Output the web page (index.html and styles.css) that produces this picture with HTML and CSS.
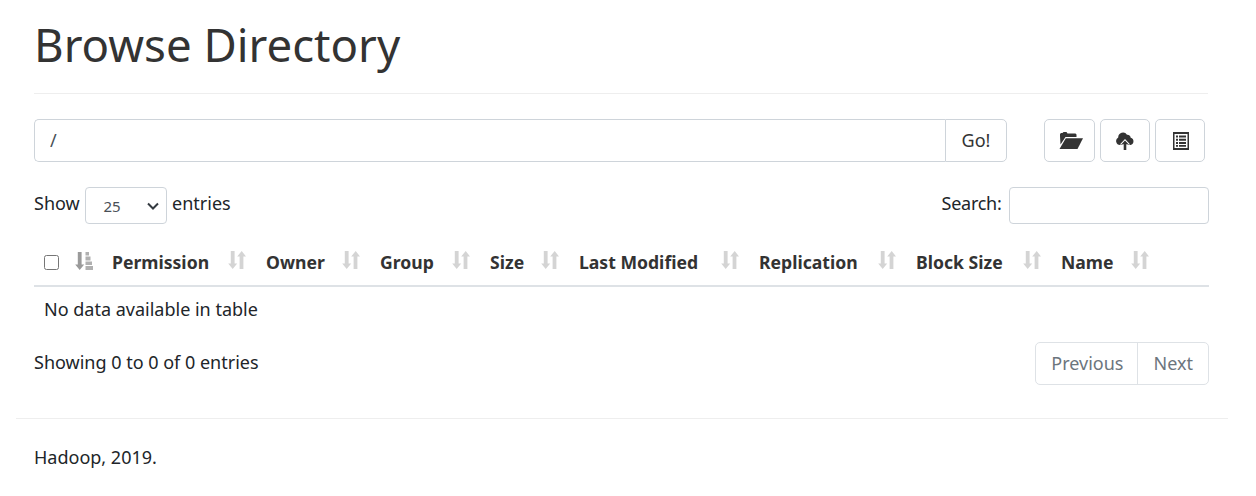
FILE: index.html
```html
<!DOCTYPE html>
<html lang="en">
<head>
  <meta charset="UTF-8" />
  <title>Browse Directory</title>
  <link rel="stylesheet" href="styles.css">
</head>
<body>
  <svg class="defs" width="0" height="0">
    <symbol id="sort-both" viewBox="0 0 18 18">
      <path d="M2.800 0h3.800v12.500h2.600L4.700 18 .2 12.500h2.600zM9.200 5.500L13.700 0l4.300 5.500h-2.600V18h-3.800V5.500z" fill="#d4d4d4"/>
    </symbol>
  </svg>

  <div class="container">
    <div class="content">
      <div class="page-header">
        <h1>Browse Directory</h1>
      </div>

      <div class="toolbar">
        <div class="path-group">
          <input type="text" class="path-input" value="/" />
          <button class="go-btn">Go!</button>
        </div>
        <div class="icon-btns">
          <button class="icon-btn folder-btn">
            <svg width="24" height="17" viewBox="0 0 24 17"><path d="M1 4V2l1-1h1.500L4.500 0h3l1 1.500h8l1 1V5H6.500L1.500 12.500z" fill="#333"/><path d="M6.800 6.200H24L18.500 17H0.500z" fill="#333"/></svg>
          </button>
          <button class="icon-btn">
            <svg width="18" height="18" viewBox="0 0 18 18"><path d="M4 13A4 4 0 0 1 2.200 5.500 4.800 4.800 0 0 1 11 2.800a3.200 3.200 0 0 1 3.700 3A3.700 3.700 0 0 1 14.500 13H4z" fill="#333"/><path d="M9 7l5.200 5.500H11.500V18h-5v-5.500H3.800z" fill="#fff"/><path d="M9 8.500l3.600 3.700H10.300v5.800H7.700v-5.800H5.400z" fill="#333"/></svg>
          </button>
          <button class="icon-btn list-btn">
            <svg width="16" height="18" viewBox="0 0 16 18"><path d="M0 0h16v18H0zM1.500 2v14h13V2z" fill="#333"/><path d="M3 3.500h2v2H3zM6 3.500h7v2H6zM3 6.800h2v2H3zM6 6.800h7v2H6zM3 10h2v2H3zM6 10h7v2H6zM3 13h2v1.800H3zM6 13h7v1.800H6z" fill="#333"/></svg>
          </button>
        </div>
      </div>

      <div class="table-top">
        <label class="length">Show
          <select class="length-select"><option>25</option></select>
          entries</label>
        <label class="search">Search: <input type="search" class="search-input" /></label>
      </div>

      <table class="files">
        <thead>
          <tr>
            <th class="col-check"><input type="checkbox" class="check" /></th>
            <th class="col-sort">
              <svg class="sort-active" width="18" height="18" viewBox="0 0 18 18"><path d="M2.800 0h3.800v12.500h2.600L4.700 18 .2 12.500h2.600z" fill="#9a9a9a"/><path d="M10.500 0h3.500v3.500h-3.500zM10.500 4.500h5v4h-5zM10.500 9.500h6.500v3.500h-6.500zM10.500 14H18v4h-7.500z" fill="#b0b0b0"/></svg>
            </th>
            <th class="col-permission">Permission <svg class="sort"><use href="#sort-both"/></svg></th>
            <th class="col-owner">Owner <svg class="sort"><use href="#sort-both"/></svg></th>
            <th class="col-group">Group <svg class="sort"><use href="#sort-both"/></svg></th>
            <th class="col-size">Size <svg class="sort"><use href="#sort-both"/></svg></th>
            <th class="col-modified">Last Modified <svg class="sort"><use href="#sort-both"/></svg></th>
            <th class="col-replication">Replication <svg class="sort"><use href="#sort-both"/></svg></th>
            <th class="col-block">Block Size <svg class="sort"><use href="#sort-both"/></svg></th>
            <th class="col-name">Name <svg class="sort"><use href="#sort-both"/></svg></th>
          </tr>
        </thead>
        <tbody>
          <tr><td colspan="10">No data available in table</td></tr>
        </tbody>
      </table>

      <div class="table-bottom">
        <div class="info">Showing 0 to 0 of 0 entries</div>
        <div class="pager">
          <a class="page-link prev">Previous</a>
          <a class="page-link next">Next</a>
        </div>
      </div>
    </div>

    <hr class="footer-rule" />
    <div class="content footer">
      <p>Hadoop, 2019.</p>
    </div>
  </div>
</body>
</html>
```

FILE: styles.css
```css
* {
  box-sizing: border-box;
}
body {
  font-family: "Noto Sans", "Open Sans", sans-serif;
  font-size: 18px;
  line-height: 27px;
  color: #212529;
  background: white;
  margin: 0;
}
.defs {
  display: block;
  height: 0;
}
.container {
  margin: 0 28px 0 16px;
}
.content {
  padding: 0 19px 0 18px;
}
.page-header {
  height: 94px;
  border-bottom: 1px solid #eee;
  padding-top: 14px;
  margin-right: 1px;
  margin-bottom: 25px;
}
h1 {
  font-size: 45.6px;
  font-weight: 400;
  line-height: 60px;
  margin: 0;
  color: #333;
}
.toolbar {
  display: flex;
  justify-content: space-between;
  align-items: center;
  height: 43px;
  padding-right: 4px;
}
.path-group {
  display: flex;
  width: 973px;
  height: 43px;
}
.path-input {
  flex: 1;
  min-width: 0;
  font: inherit;
  color: #495057;
  padding: 0 15px;
  border: 1px solid #ced4da;
  border-right: none;
  border-radius: 5px 0 0 5px;
  outline: none;
}
.go-btn {
  width: 62px;
  font: inherit;
  color: #333;
  background: white;
  border: 1px solid #ced4da;
  border-radius: 0 5px 5px 0;
  padding: 0;
}
.icon-btns {
  display: flex;
  gap: 5px;
}
.icon-btn {
  display: flex;
  align-items: center;
  justify-content: center;
  width: 50px;
  height: 43px;
  background: white;
  border: 1px solid #ced4da;
  border-radius: 5px;
  padding: 0;
}
.folder-btn {
  width: 51px;
  padding-left: 3px;
}
.list-btn {
  padding-left: 2px;
}
.table-top {
  display: flex;
  justify-content: space-between;
  align-items: center;
  margin-top: 25px;
  height: 37px;
}
.length {
  word-spacing: -1px;
}
.length-select {
  appearance: none;
  width: 82px;
  height: 37px;
  font-family: inherit;
  font-size: 15px;
  color: #495057;
  background: white url("data:image/svg+xml,%3Csvg xmlns='http://www.w3.org/2000/svg' width='12' height='8' viewBox='0 0 12 8'%3E%3Cpath d='M1 1.500l5 5 5-5' fill='none' stroke='%23343a40' stroke-width='2'/%3E%3C/svg%3E") no-repeat right 7px center;
  border: 1px solid #ced4da;
  border-radius: 4px;
  padding: 0 17px;
  margin: 0 1px 0 2px;
  vertical-align: middle;
}
.search {
  letter-spacing: -0.25px;
}
.search-input {
  width: 200px;
  height: 37px;
  border: 1px solid #ced4da;
  border-radius: 4px;
  margin-left: 3px;
  vertical-align: middle;
}
.files {
  width: 100%;
  border-collapse: collapse;
  margin-top: 6px;
  table-layout: fixed;
}
.files th {
  position: relative;
  text-align: left;
  font-size: 17.6px;
  font-weight: 700;
  color: #333;
  height: 56px;
  padding: 10px 10px 0;
  border-bottom: 2px solid #dee2e6;
  white-space: nowrap;
}
.files .col-check {
  width: 31px;
  padding-top: 6px;
}
.files .col-sort {
  width: 37px;
  padding: 4px 0 0 10px;
}
.col-permission {
  width: 154px;
}
.col-owner {
  width: 114px;
}
.col-group {
  width: 110px;
}
.col-size {
  width: 89px;
}
.col-modified {
  width: 180px;
}
.col-replication {
  width: 157px;
}
.col-block {
  width: 145px;
}
.check {
  width: 15px;
  height: 15px;
  margin: 0;
  vertical-align: middle;
}
.sort {
  position: absolute;
  top: 21px;
  right: 10px;
  width: 18px;
  height: 18px;
}
.col-name .sort {
  right: 60px;
}
.sort-active {
  vertical-align: middle;
}
.files td {
  padding: 9px 10px;
  height: 46px;
}
.table-bottom {
  display: flex;
  justify-content: space-between;
  align-items: flex-start;
  margin-top: 10px;
}
.info {
  padding-top: 7px;
}
.pager {
  display: flex;
  border: 1px solid #dee2e6;
  border-radius: 5px;
  height: 43px;
}
.page-link {
  color: #6c757d;
}
.prev {
  padding: 7px 13px 7px 15px;
}
.next {
  padding: 7px 15px 7px 16px;
  border-left: 1px solid #dee2e6;
}
.footer-rule {
  border: none;
  border-top: 1px solid #eee;
  margin: 33px 0 0;
}
.footer p {
  margin: 25px 0 0;
}
```
